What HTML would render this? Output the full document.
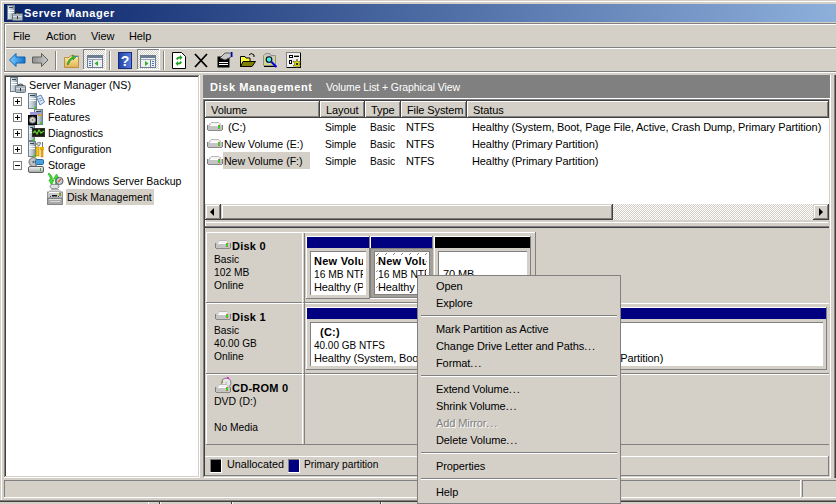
<!DOCTYPE html>
<html><head><meta charset="utf-8">
<style>
*{margin:0;padding:0;box-sizing:border-box}
html,body{width:836px;height:504px;overflow:hidden;background:#d4d0c8;font-family:"Liberation Sans",sans-serif;font-size:11px;color:#000}
.a{position:absolute}
.t{position:absolute;white-space:nowrap;line-height:13px;height:13px;letter-spacing:-0.1px}
.tr{letter-spacing:-0.22px}
.b{font-weight:bold;letter-spacing:0.25px}
svg{position:absolute;overflow:visible}
</style></head><body>
<div class="a" style="left:1px;top:1px;width:1px;height:499px;background:#fff"></div>
<div class="a" style="left:1px;top:1px;width:835px;height:1px;background:#fff"></div>
<div class="a" style="left:0px;top:500px;width:836px;height:1px;background:#808080"></div>
<div class="a" style="left:0px;top:501px;width:836px;height:1px;background:#404040"></div>
<div class="a" style="left:0px;top:502px;width:836px;height:2px;background:#d4d0c8;"></div>
<div class="a" style="left:148px;top:502px;width:1px;height:2px;background:#fff"></div>
<div class="a" style="left:159px;top:502px;width:1px;height:2px;background:#404040"></div>
<div class="a" style="left:160px;top:502px;width:1px;height:2px;background:#fff"></div>
<div class="a" style="left:231px;top:502px;width:1px;height:2px;background:#404040"></div>
<div class="a" style="left:232px;top:502px;width:1px;height:2px;background:#fff"></div>
<div class="a" style="left:380px;top:502px;width:1px;height:2px;background:#404040"></div>
<div class="a" style="left:381px;top:502px;width:1px;height:2px;background:#fff"></div>
<div class="a" style="left:4px;top:4px;width:832px;height:18px;background:linear-gradient(to right,#0a246a 0px,#a6caf0 990px);"></div>
<div class="t b" style="left:24px;top:7px;color:#fff;letter-spacing:0.6px">Server Manager</div>
<div class="a" style="left:4px;top:23px;width:832px;height:1px;background:#808080"></div>
<div class="a" style="left:5px;top:24px;width:831px;height:1px;background:#fff"></div>
<div class="a" style="left:4px;top:23px;width:1px;height:49px;background:#808080"></div>
<div class="a" style="left:5px;top:24px;width:1px;height:47px;background:#fff"></div>
<div class="a" style="left:6px;top:47px;width:830px;height:1px;background:#808080"></div>
<div class="a" style="left:5px;top:48px;width:831px;height:1px;background:#fff"></div>
<div class="a" style="left:4px;top:71px;width:832px;height:1px;background:#808080"></div>
<div class="a" style="left:4px;top:72px;width:832px;height:1px;background:#fff"></div>
<div class="t " style="left:13px;top:30px;">File</div>
<div class="t " style="left:46px;top:30px;">Action</div>
<div class="t " style="left:91px;top:30px;">View</div>
<div class="t " style="left:129px;top:30px;">Help</div>
<div class="a" style="left:4px;top:75px;width:196px;height:403px;background:#fff;"></div>
<div class="a" style="left:4px;top:75px;width:196px;height:1px;background:#808080"></div>
<div class="a" style="left:4px;top:75px;width:1px;height:403px;background:#808080"></div>
<div class="a" style="left:4px;top:477px;width:196px;height:1px;background:#fff"></div>
<div class="a" style="left:199px;top:75px;width:1px;height:403px;background:#fff"></div>
<div class="a" style="left:5px;top:76px;width:194px;height:1px;background:#404040"></div>
<div class="a" style="left:5px;top:76px;width:1px;height:401px;background:#404040"></div>
<div class="a" style="left:5px;top:476px;width:194px;height:1px;background:#d4d0c8"></div>
<div class="a" style="left:198px;top:76px;width:1px;height:401px;background:#d4d0c8"></div>
<div class="a" style="left:203px;top:75px;width:627px;height:23px;background:#808080;"></div>
<div class="t b" style="left:210px;top:81px;color:#fff;letter-spacing:0.6px">Disk Management</div>
<div class="t " style="left:326px;top:81px;color:#fff;font-size:10.5px">Volume List + Graphical View</div>
<div class="a" style="left:203px;top:98px;width:627px;height:1px;background:#fff"></div>
<div class="a" style="left:830px;top:75px;width:1px;height:403px;background:#fff"></div>
<div class="a" style="left:834px;top:75px;width:1px;height:403px;background:#808080"></div>
<div class="a" style="left:835px;top:75px;width:1px;height:403px;background:#404040"></div>
<div class="a" style="left:203px;top:99px;width:1px;height:378px;background:#808080"></div>
<div class="a" style="left:204px;top:100px;width:1px;height:376px;background:#404040"></div>
<div class="a" style="left:205px;top:101px;width:624px;height:119px;background:#fff;"></div>
<div class="a" style="left:203px;top:99px;width:627px;height:1px;background:#808080"></div>
<div class="a" style="left:204px;top:100px;width:625px;height:1px;background:#404040"></div>
<div class="a" style="left:829px;top:99px;width:1px;height:122px;background:#d4d0c8"></div>
<div class="a" style="left:205px;top:220px;width:624px;height:6px;background:#d4d0c8;"></div>
<div class="a" style="left:205px;top:222px;width:623px;height:1px;background:#fff"></div>
<div class="a" style="left:205px;top:220px;width:1px;height:6px;background:#fff"></div>
<div class="a" style="left:205px;top:226px;width:624px;height:1px;background:#808080"></div>
<div class="a" style="left:205px;top:227px;width:624px;height:1px;background:#404040"></div>
<svg width="0" height="0" style="position:absolute"><defs>
<linearGradient id="tw" x1="0" x2="1" y1="0" y2="0"><stop offset="0" stop-color="#e8eef2"/><stop offset="0.6" stop-color="#b4c2cc"/><stop offset="1" stop-color="#7d8d99"/></linearGradient>
<linearGradient id="drv" x1="0" x2="0" y1="0" y2="1"><stop offset="0" stop-color="#f4f4f4"/><stop offset="0.5" stop-color="#d0d0d0"/><stop offset="1" stop-color="#a0a0a0"/></linearGradient>
<linearGradient id="blu" x1="0" x2="1" y1="0" y2="0"><stop offset="0" stop-color="#7fd0ff"/><stop offset="1" stop-color="#1070c8"/></linearGradient>
<linearGradient id="gry" x1="0" x2="1" y1="0" y2="0"><stop offset="0" stop-color="#909090"/><stop offset="1" stop-color="#c8c8c8"/></linearGradient>
<linearGradient id="fold" x1="0" x2="0" y1="0" y2="1"><stop offset="0" stop-color="#fff0b0"/><stop offset="1" stop-color="#e0b050"/></linearGradient>
<linearGradient id="help" x1="0" x2="1" y1="0" y2="0"><stop offset="0" stop-color="#2040a0"/><stop offset="1" stop-color="#5880e0"/></linearGradient>
<pattern id="dith" width="2" height="2" patternUnits="userSpaceOnUse"><rect width="2" height="2" fill="#fff"/><rect width="1" height="1" fill="#d4d0c8"/><rect x="1" y="1" width="1" height="1" fill="#d4d0c8"/></pattern>
<pattern id="hatch" width="8" height="8" patternUnits="userSpaceOnUse"><rect width="8" height="8" fill="#fff"/><rect x="1" y="3" width="1" height="1" fill="#909090"/><rect x="2" y="2" width="1" height="1" fill="#909090"/><rect x="3" y="1" width="1" height="1" fill="#909090"/></pattern>
<pattern id="dith2" width="2" height="2" patternUnits="userSpaceOnUse"><rect width="2" height="2" fill="#d4d0c8"/><rect width="1" height="1" fill="#808080"/><rect x="1" y="1" width="1" height="1" fill="#808080"/></pattern>
</defs></svg>
<svg style="left:7px;top:5px" width="16" height="17" viewBox="0 0 16 17"><rect x="0.5" y="0.5" width="7" height="14" fill="url(#tw)" stroke="#6f7f8b"/><rect x="2" y="2" width="4" height="1" fill="#34495a"/><rect x="1" y="5" width="6" height="1" fill="#fff"/><rect x="1" y="7" width="6" height="1" fill="#fff"/><rect x="5.5" y="8.5" width="10" height="7" rx="1" fill="#a8b4bc" stroke="#687680"/><path d="M8 8.5 Q10.5 5.5 13 8.5" fill="none" stroke="#222" stroke-width="1.2"/><rect x="6" y="11" width="9" height="1" fill="#d8e0e4"/><rect x="10" y="11" width="1" height="3" fill="#333"/></svg>
<svg style="left:10px;top:77px" width="16" height="16" viewBox="0 0 16 16"><rect x="0.5" y="0.5" width="7" height="14" fill="url(#tw)" stroke="#6f7f8b"/><rect x="2" y="2" width="4" height="1" fill="#34495a"/><rect x="1" y="5" width="6" height="1" fill="#fff"/><rect x="1" y="7" width="6" height="1" fill="#fff"/><rect x="5.5" y="8.5" width="10" height="7" rx="1" fill="#a8b4bc" stroke="#687680"/><path d="M8 8.5 Q10.5 5.5 13 8.5" fill="none" stroke="#333" stroke-width="1.2"/><rect x="6" y="11" width="9" height="1" fill="#d8e0e4"/><rect x="10" y="11" width="1" height="3" fill="#333"/></svg>
<svg style="left:28px;top:93px" width="17" height="16" viewBox="0 0 17 16"><rect x="0.5" y="0.5" width="8" height="15" fill="url(#tw)" stroke="#6f7f8b"/><rect x="2" y="2" width="5" height="1" fill="#34495a"/><rect x="1" y="5" width="7" height="1" fill="#fff"/><rect x="1" y="7" width="7" height="1" fill="#fff"/><rect x="6" y="14" width="2" height="2" fill="#40d020"/><path d="M8.5 4 L13 2 L16.5 9 L12 12 Z" fill="#dbe8f6" stroke="#5d86b8"/><path d="M10.5 6 L13.5 5 M11.5 8 L14.5 7" stroke="#6d96c8"/></svg>
<svg style="left:28px;top:109px" width="17" height="16" viewBox="0 0 17 16"><rect x="6.5" y="0.5" width="8" height="15" fill="url(#tw)" stroke="#6f7f8b"/><rect x="8" y="2" width="5" height="1" fill="#34495a"/><rect x="2" y="3" width="10" height="3" fill="#9a9ad8"/><rect x="10" y="5" width="3" height="2" fill="#e0a020"/><rect x="12" y="13" width="2" height="2" fill="#40d020"/><rect x="0.5" y="6.5" width="8" height="9" fill="#1a1a1a" stroke="#000"/><circle cx="4.5" cy="11" r="3" fill="#d8d8d8" stroke="#888"/><circle cx="4.5" cy="11" r="0.8" fill="#555"/></svg>
<svg style="left:28px;top:125px" width="17" height="16" viewBox="0 0 17 16"><rect x="0.5" y="0.5" width="6" height="15" fill="url(#tw)" stroke="#6f7f8b"/><rect x="2" y="2" width="3" height="1" fill="#34495a"/><rect x="1" y="5" width="5" height="1" fill="#fff"/><rect x="1" y="7" width="5" height="1" fill="#fff"/><rect x="5" y="14" width="2" height="2" fill="#40d020"/><rect x="4.5" y="3.5" width="12" height="8" fill="#1c1c10" stroke="#303030"/><path d="M5 8 L7 6 L9 9 L11 5 L13 8 L16 6" fill="none" stroke="#60d030" stroke-width="1.3"/></svg>
<svg style="left:28px;top:141px" width="17" height="16" viewBox="0 0 17 16"><rect x="0.5" y="0.5" width="7" height="15" fill="url(#tw)" stroke="#6f7f8b"/><rect x="2" y="2" width="4" height="1" fill="#34495a"/><rect x="1" y="5" width="6" height="1" fill="#fff"/><rect x="1" y="7" width="6" height="1" fill="#fff"/><rect x="5" y="14" width="2" height="2" fill="#40d020"/><path d="M8 3 Q10 0 13 2 L11 5 Z" fill="#d0d0d0" stroke="#888"/><rect x="8" y="6" width="3" height="9" fill="#f4c818" stroke="#c89000" stroke-width="0.8"/><rect x="12" y="6" width="4" height="3" fill="#f0b000"/><rect x="13" y="9" width="2" height="7" fill="#f0b000" stroke="#c08000" stroke-width="0.6"/><rect x="14" y="1" width="1" height="5" fill="#707070"/></svg>
<svg style="left:28px;top:157px" width="17" height="16" viewBox="0 0 17 16"><circle cx="5.5" cy="5" r="4.5" fill="#c0c0c0" stroke="#707070"/><circle cx="5.5" cy="5" r="1" fill="#555"/><rect x="7.5" y="2.5" width="8" height="5" rx="1" fill="#4aa0d8" stroke="#2868a0"/><rect x="0.5" y="9.5" width="15" height="6" rx="1.5" fill="url(#drv)" stroke="#606060"/><rect x="12" y="11" width="1" height="3" fill="#30c030"/></svg>
<svg style="left:47px;top:173px" width="17" height="16" viewBox="0 0 17 16"><path d="M1 1 Q4 4 3 7 L2 7 L4.5 12 L7 7 L5.5 7 Q6 3 2 0 Z" fill="#40e030" stroke="#20a020" stroke-width="0.6"/><path d="M8.5 13 L8.5 6 L6.5 6 L9.5 1 L12.5 6 L10.5 6 L10.5 13 Z" fill="#40e030" stroke="#20a020" stroke-width="0.6"/><circle cx="12.5" cy="8" r="3.6" fill="#c0c8d8" stroke="#404040" stroke-width="0.8"/><path d="M11 9 L14 6" stroke="#e06030" stroke-width="1.2"/><ellipse cx="7.5" cy="13.5" rx="4.5" ry="2.2" fill="#e0e0e8" stroke="#707070" stroke-width="0.8"/></svg>
<svg style="left:47px;top:189px" width="17" height="16" viewBox="0 0 17 16"><rect x="2" y="1" width="12" height="2" fill="#d8d8d8"/><rect x="4" y="0" width="8" height="1" fill="#b0b0b0"/><rect x="0.5" y="3" width="15" height="6" fill="#c8c8c8" stroke="#808080" stroke-width="0.8"/><rect x="2" y="3" width="10" height="1" fill="#fff"/><rect x="12" y="4" width="2" height="3" fill="#b08020"/><rect x="12" y="5" width="2" height="1" fill="#20e020"/><rect x="5" y="6" width="5" height="1.5" fill="#101010"/><rect x="3" y="7" width="1" height="1" fill="#2030b0"/><rect x="11" y="7" width="1" height="1" fill="#2030b0"/><rect x="0.5" y="9.5" width="15" height="6" fill="#a8a8a8" stroke="#707070" stroke-width="0.8"/><rect x="2" y="10" width="12" height="1" fill="#e0e0e0"/><rect x="3" y="12" width="10" height="1" fill="#d8d8d8"/></svg>
<svg style="left:13px;top:97px" width="9" height="9" viewBox="0 0 9 9"><rect x="0.5" y="0.5" width="8" height="8" fill="#fff" stroke="#808080"/><rect x="2" y="4" width="5" height="1" fill="#000"/><rect x="4" y="2" width="1" height="5" fill="#000"/></svg>
<svg style="left:13px;top:113px" width="9" height="9" viewBox="0 0 9 9"><rect x="0.5" y="0.5" width="8" height="8" fill="#fff" stroke="#808080"/><rect x="2" y="4" width="5" height="1" fill="#000"/><rect x="4" y="2" width="1" height="5" fill="#000"/></svg>
<svg style="left:13px;top:129px" width="9" height="9" viewBox="0 0 9 9"><rect x="0.5" y="0.5" width="8" height="8" fill="#fff" stroke="#808080"/><rect x="2" y="4" width="5" height="1" fill="#000"/><rect x="4" y="2" width="1" height="5" fill="#000"/></svg>
<svg style="left:13px;top:145px" width="9" height="9" viewBox="0 0 9 9"><rect x="0.5" y="0.5" width="8" height="8" fill="#fff" stroke="#808080"/><rect x="2" y="4" width="5" height="1" fill="#000"/><rect x="4" y="2" width="1" height="5" fill="#000"/></svg>
<svg style="left:13px;top:161px" width="9" height="9" viewBox="0 0 9 9"><rect x="0.5" y="0.5" width="8" height="8" fill="#fff" stroke="#808080"/><rect x="2" y="4" width="5" height="1" fill="#000"/></svg>
<div class="t tr" style="left:29px;top:79px;;transform:scaleX(0.976);transform-origin:0 0;letter-spacing:0">Server Manager (NS)</div>
<div class="t tr" style="left:48px;top:95px;;transform:scaleX(0.97);transform-origin:0 0;letter-spacing:0">Roles</div>
<div class="t tr" style="left:48px;top:111px;;transform:scaleX(0.97);transform-origin:0 0;letter-spacing:0">Features</div>
<div class="t tr" style="left:48px;top:127px;;transform:scaleX(0.97);transform-origin:0 0;letter-spacing:0">Diagnostics</div>
<div class="t tr" style="left:48px;top:143px;;transform:scaleX(0.97);transform-origin:0 0;letter-spacing:0">Configuration</div>
<div class="t tr" style="left:48px;top:159px;;transform:scaleX(0.97);transform-origin:0 0;letter-spacing:0">Storage</div>
<div class="t tr" style="left:67px;top:175px;;transform:scaleX(0.954);transform-origin:0 0;letter-spacing:0">Windows Server Backup</div>
<div class="a" style="left:66px;top:189px;width:88px;height:16px;background:#d4d0c8;"></div>
<div class="t tr" style="left:67px;top:191px;;transform:scaleX(0.955);transform-origin:0 0;letter-spacing:0">Disk Management</div>
<div class="a" style="left:205px;top:101px;width:115px;height:17px;background:#d4d0c8;"></div>
<div class="a" style="left:205px;top:101px;width:115px;height:1px;background:#fff"></div>
<div class="a" style="left:205px;top:101px;width:1px;height:17px;background:#fff"></div>
<div class="a" style="left:318px;top:102px;width:1px;height:15px;background:#808080"></div>
<div class="a" style="left:319px;top:101px;width:1px;height:17px;background:#404040"></div>
<div class="a" style="left:206px;top:116px;width:113px;height:1px;background:#808080"></div>
<div class="a" style="left:205px;top:117px;width:115px;height:1px;background:#404040"></div>
<div class="t " style="left:211px;top:104px;">Volume</div>
<div class="a" style="left:320px;top:101px;width:45px;height:17px;background:#d4d0c8;"></div>
<div class="a" style="left:320px;top:101px;width:45px;height:1px;background:#fff"></div>
<div class="a" style="left:320px;top:101px;width:1px;height:17px;background:#fff"></div>
<div class="a" style="left:363px;top:102px;width:1px;height:15px;background:#808080"></div>
<div class="a" style="left:364px;top:101px;width:1px;height:17px;background:#404040"></div>
<div class="a" style="left:321px;top:116px;width:43px;height:1px;background:#808080"></div>
<div class="a" style="left:320px;top:117px;width:45px;height:1px;background:#404040"></div>
<div class="t " style="left:326px;top:104px;">Layout</div>
<div class="a" style="left:365px;top:101px;width:36px;height:17px;background:#d4d0c8;"></div>
<div class="a" style="left:365px;top:101px;width:36px;height:1px;background:#fff"></div>
<div class="a" style="left:365px;top:101px;width:1px;height:17px;background:#fff"></div>
<div class="a" style="left:399px;top:102px;width:1px;height:15px;background:#808080"></div>
<div class="a" style="left:400px;top:101px;width:1px;height:17px;background:#404040"></div>
<div class="a" style="left:366px;top:116px;width:34px;height:1px;background:#808080"></div>
<div class="a" style="left:365px;top:117px;width:36px;height:1px;background:#404040"></div>
<div class="t " style="left:371px;top:104px;">Type</div>
<div class="a" style="left:401px;top:101px;width:66px;height:17px;background:#d4d0c8;"></div>
<div class="a" style="left:401px;top:101px;width:66px;height:1px;background:#fff"></div>
<div class="a" style="left:401px;top:101px;width:1px;height:17px;background:#fff"></div>
<div class="a" style="left:465px;top:102px;width:1px;height:15px;background:#808080"></div>
<div class="a" style="left:466px;top:101px;width:1px;height:17px;background:#404040"></div>
<div class="a" style="left:402px;top:116px;width:64px;height:1px;background:#808080"></div>
<div class="a" style="left:401px;top:117px;width:66px;height:1px;background:#404040"></div>
<div class="t " style="left:407px;top:104px;">File System</div>
<div class="a" style="left:467px;top:101px;width:362px;height:17px;background:#d4d0c8;"></div>
<div class="a" style="left:467px;top:101px;width:362px;height:1px;background:#fff"></div>
<div class="a" style="left:467px;top:101px;width:1px;height:17px;background:#fff"></div>
<div class="a" style="left:827px;top:102px;width:1px;height:15px;background:#808080"></div>
<div class="a" style="left:828px;top:101px;width:1px;height:17px;background:#404040"></div>
<div class="a" style="left:468px;top:116px;width:360px;height:1px;background:#808080"></div>
<div class="a" style="left:467px;top:117px;width:362px;height:1px;background:#404040"></div>
<div class="t " style="left:473px;top:104px;">Status</div>
<div class="a" style="left:223px;top:152px;width:87px;height:17px;background:#d4d0c8;"></div>
<svg style="left:207px;top:122px" width="16" height="9" viewBox="0 0 16 9"><rect x="4" y="0" width="8" height="1" fill="#b8b8b8"/><rect x="2" y="1" width="12" height="2" fill="#d0d0d0"/><rect x="4" y="1" width="8" height="2" fill="#f4f4f4"/><rect x="0" y="3" width="16" height="5" fill="#c4c4c4"/><rect x="0" y="3" width="1" height="5" fill="#7c7c7c"/><rect x="15" y="3" width="1" height="5" fill="#7c7c7c"/><rect x="3" y="3" width="10" height="1" fill="#fff"/><rect x="11" y="3" width="2" height="4" fill="#a88a30"/><rect x="11" y="4" width="2" height="2" fill="#20e020"/><rect x="1" y="8" width="14" height="1" fill="#8a8a8a"/></svg>
<div class="t " style="left:228px;top:121px;">(C:)</div>
<div class="t " style="left:325px;top:121px;;transform:scaleX(0.93);transform-origin:0 0;letter-spacing:0">Simple</div>
<div class="t " style="left:370px;top:121px;;transform:scaleX(0.93);transform-origin:0 0;letter-spacing:0">Basic</div>
<div class="t " style="left:406px;top:121px;">NTFS</div>
<div class="t " style="left:472px;top:121px;">Healthy (System, Boot, Page File, Active, Crash Dump, Primary Partition)</div>
<svg style="left:207px;top:139px" width="16" height="9" viewBox="0 0 16 9"><rect x="4" y="0" width="8" height="1" fill="#b8b8b8"/><rect x="2" y="1" width="12" height="2" fill="#d0d0d0"/><rect x="4" y="1" width="8" height="2" fill="#f4f4f4"/><rect x="0" y="3" width="16" height="5" fill="#c4c4c4"/><rect x="0" y="3" width="1" height="5" fill="#7c7c7c"/><rect x="15" y="3" width="1" height="5" fill="#7c7c7c"/><rect x="3" y="3" width="10" height="1" fill="#fff"/><rect x="11" y="3" width="2" height="4" fill="#a88a30"/><rect x="11" y="4" width="2" height="2" fill="#20e020"/><rect x="1" y="8" width="14" height="1" fill="#8a8a8a"/></svg>
<div class="t " style="left:224px;top:138px;;transform:scaleX(0.959);transform-origin:0 0;letter-spacing:0">New Volume (E:)</div>
<div class="t " style="left:325px;top:138px;;transform:scaleX(0.93);transform-origin:0 0;letter-spacing:0">Simple</div>
<div class="t " style="left:370px;top:138px;;transform:scaleX(0.93);transform-origin:0 0;letter-spacing:0">Basic</div>
<div class="t " style="left:406px;top:138px;">NTFS</div>
<div class="t " style="left:472px;top:138px;">Healthy (Primary Partition)</div>
<svg style="left:207px;top:156px" width="16" height="9" viewBox="0 0 16 9"><rect x="4" y="0" width="8" height="1" fill="#b8b8b8"/><rect x="2" y="1" width="12" height="2" fill="#d0d0d0"/><rect x="4" y="1" width="8" height="2" fill="#f4f4f4"/><rect x="0" y="3" width="16" height="5" fill="#c4c4c4"/><rect x="0" y="3" width="1" height="5" fill="#7c7c7c"/><rect x="15" y="3" width="1" height="5" fill="#7c7c7c"/><rect x="3" y="3" width="10" height="1" fill="#fff"/><rect x="11" y="3" width="2" height="4" fill="#a88a30"/><rect x="11" y="4" width="2" height="2" fill="#20e020"/><rect x="1" y="8" width="14" height="1" fill="#8a8a8a"/></svg>
<div class="t " style="left:224px;top:155px;;transform:scaleX(0.959);transform-origin:0 0;letter-spacing:0">New Volume (F:)</div>
<div class="t " style="left:325px;top:155px;;transform:scaleX(0.93);transform-origin:0 0;letter-spacing:0">Simple</div>
<div class="t " style="left:370px;top:155px;;transform:scaleX(0.93);transform-origin:0 0;letter-spacing:0">Basic</div>
<div class="t " style="left:406px;top:155px;">NTFS</div>
<div class="t " style="left:472px;top:155px;">Healthy (Primary Partition)</div>
<svg style="left:613px;top:204px" width="200" height="16"><rect width="200" height="16" fill="url(#dith)"/></svg>
<div class="a" style="left:205px;top:204px;width:16px;height:16px;background:#d4d0c8;"></div>
<div class="a" style="left:205px;top:204px;width:16px;height:1px;background:#d4d0c8"></div>
<div class="a" style="left:205px;top:204px;width:1px;height:16px;background:#d4d0c8"></div>
<div class="a" style="left:205px;top:219px;width:16px;height:1px;background:#404040"></div>
<div class="a" style="left:220px;top:204px;width:1px;height:16px;background:#404040"></div>
<div class="a" style="left:206px;top:205px;width:14px;height:1px;background:#fff"></div>
<div class="a" style="left:206px;top:205px;width:1px;height:14px;background:#fff"></div>
<div class="a" style="left:206px;top:218px;width:14px;height:1px;background:#808080"></div>
<div class="a" style="left:219px;top:205px;width:1px;height:14px;background:#808080"></div>
<svg style="left:205px;top:204px" width="16" height="16" viewBox="0 0 16 16"><path d="M5 8 L9 4 L9 12 Z" fill="#000"/></svg>
<div class="a" style="left:221px;top:204px;width:392px;height:16px;background:#d4d0c8;"></div>
<div class="a" style="left:221px;top:204px;width:392px;height:1px;background:#d4d0c8"></div>
<div class="a" style="left:221px;top:204px;width:1px;height:16px;background:#d4d0c8"></div>
<div class="a" style="left:221px;top:219px;width:392px;height:1px;background:#404040"></div>
<div class="a" style="left:612px;top:204px;width:1px;height:16px;background:#404040"></div>
<div class="a" style="left:222px;top:205px;width:390px;height:1px;background:#fff"></div>
<div class="a" style="left:222px;top:205px;width:1px;height:14px;background:#fff"></div>
<div class="a" style="left:222px;top:218px;width:390px;height:1px;background:#808080"></div>
<div class="a" style="left:611px;top:205px;width:1px;height:14px;background:#808080"></div>
<div class="a" style="left:813px;top:204px;width:16px;height:16px;background:#d4d0c8;"></div>
<div class="a" style="left:813px;top:204px;width:16px;height:1px;background:#d4d0c8"></div>
<div class="a" style="left:813px;top:204px;width:1px;height:16px;background:#d4d0c8"></div>
<div class="a" style="left:813px;top:219px;width:16px;height:1px;background:#404040"></div>
<div class="a" style="left:828px;top:204px;width:1px;height:16px;background:#404040"></div>
<div class="a" style="left:814px;top:205px;width:14px;height:1px;background:#fff"></div>
<div class="a" style="left:814px;top:205px;width:1px;height:14px;background:#fff"></div>
<div class="a" style="left:814px;top:218px;width:14px;height:1px;background:#808080"></div>
<div class="a" style="left:827px;top:205px;width:1px;height:14px;background:#808080"></div>
<svg style="left:813px;top:204px" width="16" height="16" viewBox="0 0 16 16"><path d="M10 8 L6 4 L6 12 Z" fill="#000"/></svg>
<div class="a" style="left:206px;top:232px;width:329px;height:1px;background:#fff"></div>
<div class="a" style="left:206px;top:232px;width:1px;height:212px;background:#fff"></div>
<div class="a" style="left:206px;top:302px;width:330px;height:1px;background:#808080"></div>
<div class="a" style="left:206px;top:303px;width:623px;height:1px;background:#fff"></div>
<div class="a" style="left:206px;top:373px;width:623px;height:1px;background:#808080"></div>
<div class="a" style="left:206px;top:374px;width:623px;height:1px;background:#fff"></div>
<div class="a" style="left:206px;top:444px;width:623px;height:1px;background:#808080"></div>
<div class="a" style="left:302px;top:233px;width:1px;height:211px;background:#fff"></div>
<div class="a" style="left:304px;top:233px;width:1px;height:211px;background:#808080"></div>
<svg style="left:215px;top:240px" width="16" height="9" viewBox="0 0 16 9"><rect x="4" y="0" width="8" height="1" fill="#b8b8b8"/><rect x="2" y="1" width="12" height="2" fill="#d0d0d0"/><rect x="4" y="1" width="8" height="2" fill="#f4f4f4"/><rect x="0" y="3" width="16" height="5" fill="#c4c4c4"/><rect x="0" y="3" width="1" height="5" fill="#7c7c7c"/><rect x="15" y="3" width="1" height="5" fill="#7c7c7c"/><rect x="3" y="3" width="10" height="1" fill="#fff"/><rect x="11" y="3" width="2" height="4" fill="#a88a30"/><rect x="11" y="4" width="2" height="2" fill="#20e020"/><rect x="1" y="8" width="14" height="1" fill="#8a8a8a"/></svg>
<div class="t b" style="left:232px;top:240px;">Disk 0</div>
<div class="t " style="left:214px;top:253px;;transform:scaleX(0.93);transform-origin:0 0;letter-spacing:0">Basic</div>
<div class="t " style="left:214px;top:266px;;transform:scaleX(0.933);transform-origin:0 0;letter-spacing:0">102 MB</div>
<div class="t " style="left:214px;top:279px;;transform:scaleX(0.93);transform-origin:0 0;letter-spacing:0">Online</div>
<svg style="left:215px;top:311px" width="16" height="9" viewBox="0 0 16 9"><rect x="4" y="0" width="8" height="1" fill="#b8b8b8"/><rect x="2" y="1" width="12" height="2" fill="#d0d0d0"/><rect x="4" y="1" width="8" height="2" fill="#f4f4f4"/><rect x="0" y="3" width="16" height="5" fill="#c4c4c4"/><rect x="0" y="3" width="1" height="5" fill="#7c7c7c"/><rect x="15" y="3" width="1" height="5" fill="#7c7c7c"/><rect x="3" y="3" width="10" height="1" fill="#fff"/><rect x="11" y="3" width="2" height="4" fill="#a88a30"/><rect x="11" y="4" width="2" height="2" fill="#20e020"/><rect x="1" y="8" width="14" height="1" fill="#8a8a8a"/></svg>
<div class="t b" style="left:232px;top:311px;">Disk 1</div>
<div class="t " style="left:214px;top:324px;;transform:scaleX(0.93);transform-origin:0 0;letter-spacing:0">Basic</div>
<div class="t " style="left:214px;top:337px;;transform:scaleX(0.92);transform-origin:0 0;letter-spacing:0">40.00 GB</div>
<div class="t " style="left:214px;top:350px;;transform:scaleX(0.93);transform-origin:0 0;letter-spacing:0">Online</div>
<svg style="left:215px;top:377px" width="16" height="16" viewBox="0 0 16 16"><circle cx="11.3" cy="5.7" r="4.6" fill="#e8e8e8" stroke="#8a8a8a" stroke-width="1.2"/><circle cx="11.3" cy="5.7" r="1.2" fill="#c8c8c8"/><rect x="7" y="4" width="1" height="2" fill="#a09020"/><rect x="12" y="0" width="2" height="2" fill="#f020f0"/><g transform="translate(0,7)"><rect x="4" y="0" width="8" height="1" fill="#b8b8b8"/><rect x="2" y="1" width="12" height="2" fill="#d0d0d0"/><rect x="4" y="1" width="8" height="2" fill="#f4f4f4"/><rect x="0" y="3" width="16" height="5" fill="#c4c4c4"/><rect x="0" y="3" width="1" height="5" fill="#7c7c7c"/><rect x="15" y="3" width="1" height="5" fill="#7c7c7c"/><rect x="3" y="3" width="10" height="1" fill="#fff"/><rect x="11" y="3" width="2" height="4" fill="#a88a30"/><rect x="11" y="4" width="2" height="2" fill="#20e020"/><rect x="1" y="8" width="14" height="1" fill="#8a8a8a"/></g></svg>
<div class="t b" style="left:232px;top:382px;">CD-ROM 0</div>
<div class="t " style="left:214px;top:395px;;transform:scaleX(0.953);transform-origin:0 0;letter-spacing:0">DVD (D:)</div>
<div class="t " style="left:214px;top:421px;;transform:scaleX(0.935);transform-origin:0 0;letter-spacing:0">No Media</div>
<div class="a" style="left:535px;top:232px;width:1px;height:71px;background:#808080"></div>
<div class="a" style="left:306px;top:236px;width:63px;height:1px;background:#fff"></div>
<div class="a" style="left:306px;top:236px;width:1px;height:62px;background:#fff"></div>
<div class="a" style="left:369px;top:236px;width:1px;height:63px;background:#808080"></div>
<div class="a" style="left:306px;top:298px;width:63px;height:1px;background:#808080"></div>
<div class="a" style="left:307px;top:237px;width:62px;height:11px;background:#000080;"></div>
<div class="a" style="left:310px;top:251px;width:56px;height:44px;background:#808080;"></div>
<div class="a" style="left:311px;top:252px;width:55px;height:43px;background:#fff;"></div>
<div class="a" style="left:314px;top:255px;width:49px;height:40px;overflow:hidden"><div class="t b" style="left:0;top:0px;">New Volume (E:)</div><div class="t " style="left:0;top:13px;transform:scaleX(0.93);transform-origin:0 0;letter-spacing:0">16 MB NTFS</div><div class="t " style="left:0;top:26px;">Healthy (Primary Partition)</div></div>
<div class="a" style="left:370px;top:236px;width:62px;height:1px;background:#fff"></div>
<div class="a" style="left:370px;top:236px;width:1px;height:12px;background:#fff"></div>
<div class="a" style="left:432px;top:236px;width:1px;height:63px;background:#808080"></div>
<div class="a" style="left:371px;top:237px;width:61px;height:11px;background:#000080;"></div>
<div class="a" style="left:370px;top:248px;width:63px;height:50px;background:#808080;"></div>
<div class="a" style="left:371px;top:249px;width:62px;height:48px;background:#a49f98;"></div>
<div class="a" style="left:374px;top:251px;width:56px;height:44px;background:#808080;"></div>
<div class="a" style="left:375px;top:252px;width:54px;height:42px;background:#fff;"></div>
<div class="a" style="left:370px;top:298px;width:63px;height:1px;background:#fff"></div>
<svg style="left:375px;top:252px" width="54" height="42"><rect width="54" height="42" fill="url(#hatch)"/></svg>
<div class="a" style="left:378px;top:255px;width:48px;height:39px;background:#fff"></div>
<div class="a" style="left:378px;top:255px;width:48px;height:40px;overflow:hidden"><div class="t b" style="left:0;top:0px;">New Volume (F:)</div><div class="t " style="left:0;top:13px;transform:scaleX(0.93);transform-origin:0 0;letter-spacing:0">16 MB NTFS</div><div class="t " style="left:0;top:26px;">Healthy (Primary Partition)</div></div>
<div class="a" style="left:434px;top:236px;width:96px;height:1px;background:#fff"></div>
<div class="a" style="left:434px;top:236px;width:1px;height:62px;background:#fff"></div>
<div class="a" style="left:530px;top:236px;width:1px;height:63px;background:#808080"></div>
<div class="a" style="left:434px;top:298px;width:96px;height:1px;background:#808080"></div>
<div class="a" style="left:435px;top:237px;width:95px;height:11px;background:#000000;"></div>
<div class="a" style="left:438px;top:251px;width:89px;height:44px;background:#808080;"></div>
<div class="a" style="left:439px;top:252px;width:88px;height:43px;background:#fff;"></div>
<div class="a" style="left:443px;top:255px;width:80px;height:40px;overflow:hidden"><div class="t " style="left:0;top:0px;"></div><div class="t " style="left:0;top:13px;">70 MB</div><div class="t " style="left:0;top:26px;transform:scaleX(0.981);transform-origin:0 0;letter-spacing:0">Unallocated</div></div>
<div class="a" style="left:306px;top:307px;width:520px;height:1px;background:#fff"></div>
<div class="a" style="left:306px;top:307px;width:1px;height:62px;background:#fff"></div>
<div class="a" style="left:826px;top:307px;width:1px;height:63px;background:#808080"></div>
<div class="a" style="left:306px;top:369px;width:520px;height:1px;background:#808080"></div>
<div class="a" style="left:307px;top:308px;width:519px;height:11px;background:#000080;"></div>
<div class="a" style="left:310px;top:322px;width:513px;height:44px;background:#808080;"></div>
<div class="a" style="left:311px;top:323px;width:512px;height:43px;background:#fff;"></div>
<div class="a" style="left:320px;top:326px;width:500px;height:40px;overflow:hidden"><div class="t b" style="left:0;top:0px;">(C:)</div></div>
<div class="a" style="left:314px;top:339px;width:508px;height:40px;overflow:hidden"><div class="t " style="left:0;top:0px;transform:scaleX(0.906);transform-origin:0 0;letter-spacing:0">40.00 GB NTFS</div><div class="t " style="left:0;top:13px;">Healthy (System, Boot, Page File, Active, Crash Dump, Primary Partition)</div></div>
<div class="a" style="left:205px;top:456px;width:623px;height:1px;background:#fff"></div>
<div class="a" style="left:205px;top:475px;width:624px;height:1px;background:#808080"></div>
<div class="a" style="left:828px;top:456px;width:1px;height:20px;background:#808080"></div>
<div class="a" style="left:210px;top:459px;width:12px;height:14px;background:#fff;"></div>
<div class="a" style="left:210px;top:459px;width:11px;height:13px;background:#808080;"></div>
<div class="a" style="left:211px;top:460px;width:10px;height:12px;background:#000;"></div>
<div class="t " style="left:227px;top:458px;;transform:scaleX(0.981);transform-origin:0 0;letter-spacing:0">Unallocated</div>
<div class="a" style="left:288px;top:459px;width:12px;height:14px;background:#fff;"></div>
<div class="a" style="left:288px;top:459px;width:11px;height:13px;background:#808080;"></div>
<div class="a" style="left:289px;top:460px;width:10px;height:12px;background:#000080;"></div>
<div class="t " style="left:304px;top:458px;;transform:scaleX(0.93);transform-origin:0 0;letter-spacing:0">Primary partition</div>
<div class="a" style="left:204px;top:477px;width:627px;height:1px;background:#fff"></div>
<div class="a" style="left:4px;top:480px;width:797px;height:1px;background:#808080"></div>
<div class="a" style="left:4px;top:480px;width:1px;height:17px;background:#808080"></div>
<div class="a" style="left:4px;top:497px;width:797px;height:1px;background:#fff"></div>
<div class="a" style="left:800px;top:480px;width:1px;height:18px;background:#fff"></div>
<div class="a" style="left:802px;top:480px;width:34px;height:1px;background:#808080"></div>
<div class="a" style="left:802px;top:480px;width:1px;height:17px;background:#808080"></div>
<div class="a" style="left:802px;top:497px;width:34px;height:1px;background:#fff"></div>
<svg style="left:9px;top:53px" width="17" height="15" viewBox="0 0 17 15"><path d="M0.5 7 L7 0.5 L7 4 L16 4 L16 10 L7 10 L7 13.5 Z" fill="url(#blu)" stroke="#1060b0" stroke-linejoin="round"/></svg>
<svg style="left:32px;top:53px" width="17" height="15" viewBox="0 0 17 15"><path d="M16 7 L9.5 0.5 L9.5 4 L0.5 4 L0.5 10 L9.5 10 L9.5 13.5 Z" fill="url(#gry)" stroke="#606060" stroke-linejoin="round"/></svg>
<div class="a" style="left:55px;top:51px;width:1px;height:19px;background:#808080"></div>
<div class="a" style="left:56px;top:51px;width:1px;height:19px;background:#fff"></div>
<svg style="left:64px;top:53px" width="15" height="15" viewBox="0 0 15 15"><path d="M0.5 4.5 L5 4.5 L6 3 L14.5 3 L14.5 14.5 L0.5 14.5 Z" fill="url(#fold)" stroke="#c09040"/><path d="M3 11 Q5 5 9 4 L8 2 L12 4 L9 7 L9 5.5 Q6 7 4 12 Z" fill="#40c030" stroke="#208020" stroke-width="0.6"/><rect x="11" y="3" width="3" height="1" fill="#3090e0"/></svg>
<svg style="left:84px;top:50px" width="21" height="19"><rect width="21" height="19" fill="url(#dith)"/></svg>
<div class="a" style="left:83px;top:49px;width:22px;height:1px;background:#808080"></div>
<div class="a" style="left:83px;top:49px;width:1px;height:21px;background:#808080"></div>
<div class="a" style="left:83px;top:69px;width:23px;height:1px;background:#fff"></div>
<div class="a" style="left:105px;top:49px;width:1px;height:21px;background:#fff"></div>
<svg style="left:138px;top:50px" width="21" height="19"><rect width="21" height="19" fill="url(#dith)"/></svg>
<div class="a" style="left:137px;top:49px;width:22px;height:1px;background:#808080"></div>
<div class="a" style="left:137px;top:49px;width:1px;height:21px;background:#808080"></div>
<div class="a" style="left:137px;top:69px;width:23px;height:1px;background:#fff"></div>
<div class="a" style="left:159px;top:49px;width:1px;height:21px;background:#fff"></div>
<svg style="left:87px;top:55px" width="16" height="13" viewBox="0 0 16 13"><rect x="0.5" y="0.5" width="15" height="12" fill="#f0f0f0" stroke="#6d7d94"/><rect x="1" y="1" width="14" height="2" fill="#6d7d94"/><rect x="1" y="4" width="14" height="1" fill="#9aa8bc"/><rect x="5" y="5" width="1" height="8" fill="#6d7d94"/><rect x="2" y="6" width="2" height="1" fill="#3a80d0"/><rect x="2" y="8" width="2" height="1" fill="#3a80d0"/><rect x="2" y="10" width="2" height="1" fill="#3a80d0"/><path d="M11 6 L7.5 8.5 L11 11 Z" fill="#30b030"/></svg>
<div class="a" style="left:109px;top:51px;width:1px;height:19px;background:#808080"></div>
<div class="a" style="left:110px;top:51px;width:1px;height:19px;background:#fff"></div>
<svg style="left:118px;top:52px" width="14" height="17" viewBox="0 0 14 17"><rect x="0.5" y="0.5" width="13" height="16" fill="url(#help)" stroke="#1a2a80"/><text x="7" y="13.5" font-family="Liberation Sans" font-weight="bold" font-size="14" fill="#fff" text-anchor="middle">?</text></svg>
<svg style="left:140px;top:55px" width="16" height="13" viewBox="0 0 16 13"><rect x="0.5" y="0.5" width="15" height="12" fill="#f0f0f0" stroke="#6d7d94"/><rect x="1" y="1" width="14" height="2" fill="#6d7d94"/><rect x="1" y="4" width="14" height="1" fill="#9aa8bc"/><rect x="10" y="5" width="1" height="8" fill="#6d7d94"/><rect x="12" y="6" width="2" height="1" fill="#3a80d0"/><rect x="12" y="8" width="2" height="1" fill="#3a80d0"/><rect x="12" y="10" width="2" height="1" fill="#3a80d0"/><path d="M5 6 L8.5 8.5 L5 11 Z" fill="#30b030"/></svg>
<div class="a" style="left:163px;top:51px;width:1px;height:19px;background:#808080"></div>
<div class="a" style="left:164px;top:51px;width:1px;height:19px;background:#fff"></div>
<svg style="left:172px;top:52px" width="14" height="17" viewBox="0 0 14 17"><path d="M0.5 0.5 L9.5 0.5 L13.5 4.5 L13.5 16.5 L0.5 16.5 Z" fill="#fff" stroke="#000"/><path d="M4 7 Q5 4 8 4.5 L8 3 L10.5 5.5 L8 8 L8 6.5 Q6 6 5.5 8 Z" fill="#20a020"/><path d="M10 10 Q9 13 6 12.5 L6 14 L3.5 11.5 L6 9 L6 10.5 Q8 11 8.5 9 Z" fill="#20a020"/></svg>
<svg style="left:194px;top:53px" width="14" height="15" viewBox="0 0 14 15"><path d="M1 1 L13 14 M13 1 L1 14" stroke="#000" stroke-width="1.8"/></svg>
<svg style="left:217px;top:52px" width="16" height="16" viewBox="0 0 16 16"><rect x="0.5" y="4.5" width="12" height="11" fill="#000"/><rect x="2" y="10" width="9" height="1" fill="#fff"/><rect x="2" y="12" width="9" height="1" fill="#fff"/><path d="M3 6 L8 1 L14 1 L14 5 L8 8 Z" fill="#c8c8c8" stroke="#404040" stroke-width="0.8"/><rect x="14" y="0" width="1.5" height="5" fill="#0000c0"/></svg>
<svg style="left:240px;top:53px" width="16" height="14" viewBox="0 0 16 14"><path d="M0.5 3.5 L5 3.5 L6 5 L10 5 L10 13.5 L0.5 13.5 Z" fill="#ffff40" stroke="#000"/><path d="M0.5 13.5 L3 8.5 L15.5 8.5 L12 13.5 Z" fill="#808000" stroke="#000"/><path d="M9 2 Q11 -1 14 2 L14 4" fill="none" stroke="#000"/></svg>
<svg style="left:263px;top:53px" width="16" height="16" viewBox="0 0 16 16"><path d="M0.5 2.5 L3 0.5 L7 0.5 L8 2.5 L12.5 2.5 L12.5 12.5 L0.5 12.5 Z" fill="#c8c8c8" stroke="#909090"/><path d="M1.5 2.5 L1.5 11.5 L11.5 11.5 L11.5 3.5" fill="none" stroke="#f0f000" stroke-dasharray="1 1"/><rect x="1" y="13" width="12" height="1" fill="#000"/><circle cx="6" cy="6.5" r="2.8" fill="#40f0f0" stroke="#000" stroke-width="1.1"/><path d="M8.5 9 L13.5 14" stroke="#0000e0" stroke-width="2"/></svg>
<svg style="left:286px;top:52px" width="16" height="17" viewBox="0 0 16 17"><rect x="0.5" y="0.5" width="14" height="15" fill="#f0f0f0" stroke="#808080"/><rect x="1" y="15" width="14" height="1" fill="#000"/><rect x="14" y="1" width="1" height="15" fill="#000"/><rect x="3" y="3" width="4" height="3" fill="#000"/><rect x="4" y="4" width="2" height="1" fill="#fff"/><rect x="8" y="4" width="5" height="1" fill="#000"/><rect x="8" y="3" width="5" height="1" fill="#a0a0a0"/><rect x="3" y="8" width="3" height="4" fill="#000"/><rect x="4" y="9" width="1" height="2" fill="#fff"/><path d="M11 7 L12 10 L15 9 L13 12 L15 14 L12 14 L11 16 L10 14 L7 14 L9 12 L7 9 L10 10 Z" fill="#f8f800" stroke="#202000" stroke-width="0.5"/><circle cx="11" cy="12" r="1.3" fill="#303030"/></svg>
<div class="a" style="left:417px;top:275px;width:204px;height:229px;background:#d4d0c8;border:1px solid #808080"></div>
<div class="t " style="left:436px;top:280px;">Open</div>
<div class="t " style="left:436px;top:297px;">Explore</div>
<div class="a" style="left:421px;top:315px;width:196px;height:1px;background:#808080"></div>
<div class="a" style="left:421px;top:316px;width:196px;height:1px;background:#fff"></div>
<div class="t " style="left:436px;top:323px;">Mark Partition as Active</div>
<div class="t " style="left:436px;top:340px;">Change Drive Letter and Paths<span style="letter-spacing:0.9px">..</span>.</div>
<div class="t " style="left:436px;top:357px;">Format<span style="letter-spacing:0.9px">..</span>.</div>
<div class="a" style="left:421px;top:375px;width:196px;height:1px;background:#808080"></div>
<div class="a" style="left:421px;top:376px;width:196px;height:1px;background:#fff"></div>
<div class="t " style="left:436px;top:383px;">Extend Volume<span style="letter-spacing:0.9px">..</span>.</div>
<div class="t " style="left:436px;top:400px;">Shrink Volume<span style="letter-spacing:0.9px">..</span>.</div>
<div class="t " style="left:437px;top:418px;color:#fff">Add Mirror<span style="letter-spacing:0.9px">..</span>.</div>
<div class="t " style="left:436px;top:417px;color:#808080">Add Mirror<span style="letter-spacing:0.9px">..</span>.</div>
<div class="t " style="left:436px;top:434px;">Delete Volume<span style="letter-spacing:0.9px">..</span>.</div>
<div class="a" style="left:421px;top:452px;width:196px;height:1px;background:#808080"></div>
<div class="a" style="left:421px;top:453px;width:196px;height:1px;background:#fff"></div>
<div class="t " style="left:436px;top:460px;">Properties</div>
<div class="a" style="left:421px;top:478px;width:196px;height:1px;background:#808080"></div>
<div class="a" style="left:421px;top:479px;width:196px;height:1px;background:#fff"></div>
<div class="t " style="left:436px;top:486px;">Help</div>
</body></html>
